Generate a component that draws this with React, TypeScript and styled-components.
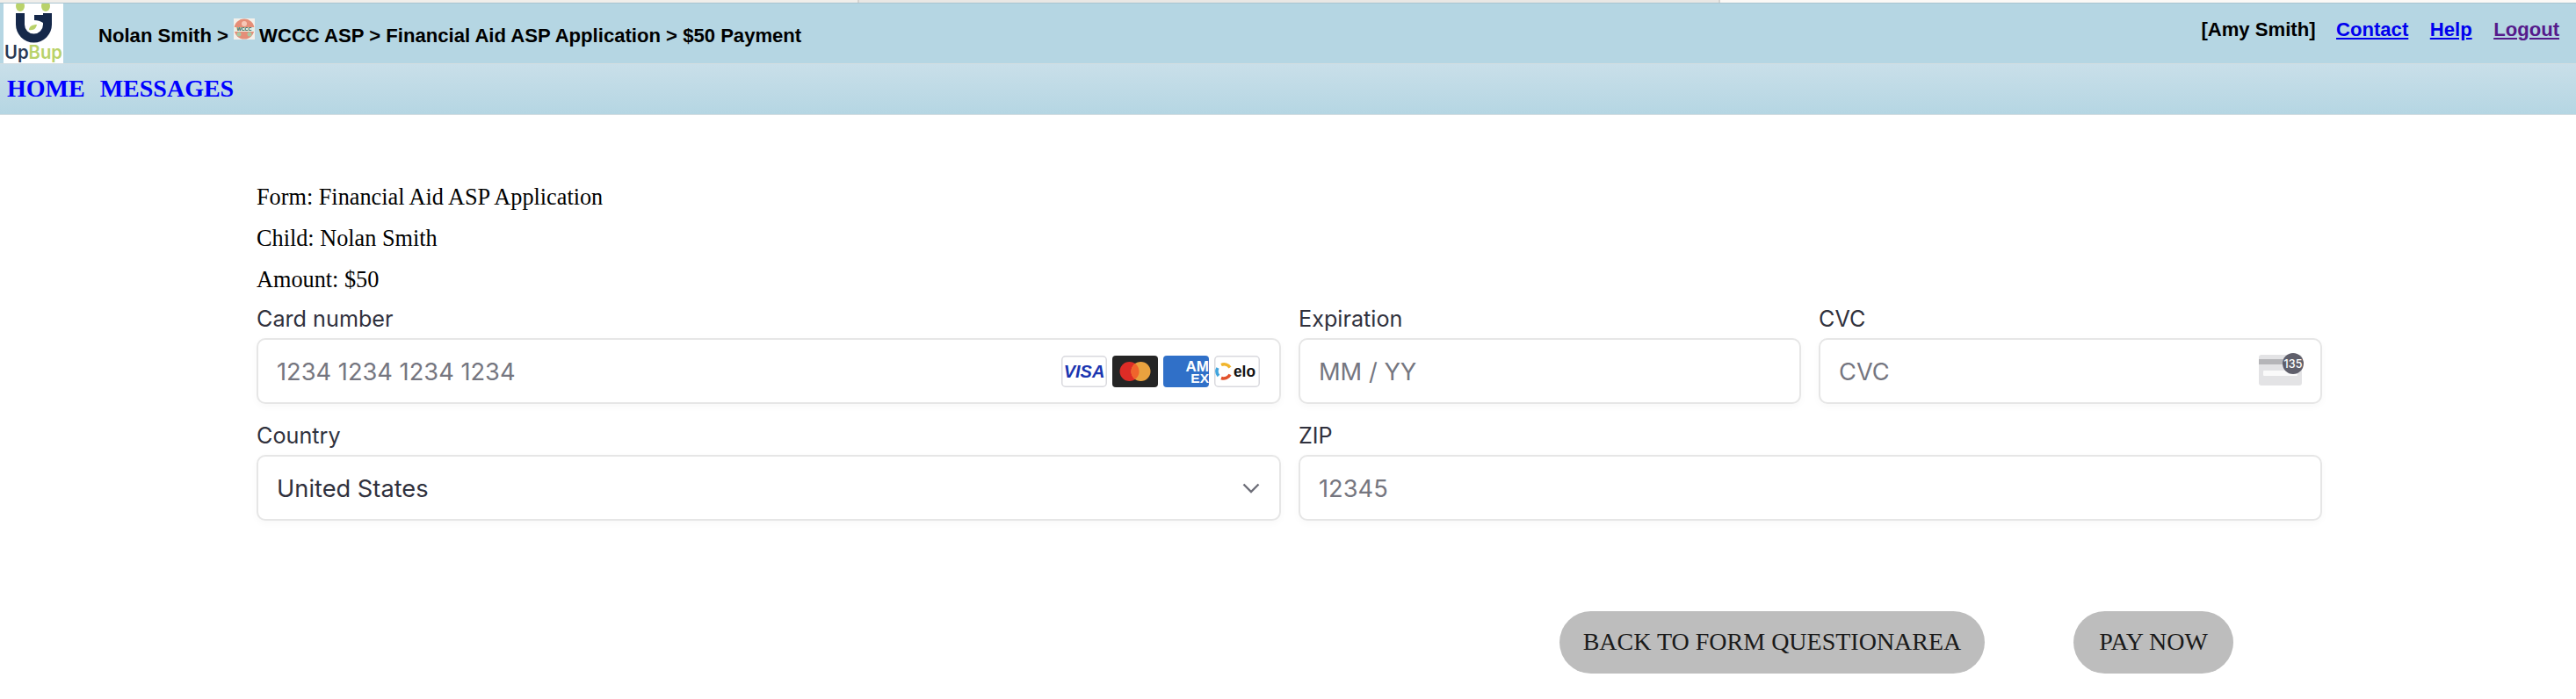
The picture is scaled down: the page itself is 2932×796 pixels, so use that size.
import React from "react";
import styled, { createGlobalStyle } from "styled-components";

const Global = createGlobalStyle`
  html, body { margin: 0; padding: 0; background: #fff; }
  body { font-family: "Liberation Serif", serif; color: #000; overflow: hidden; }
`;
const Page = styled.div`
  width: 2932px;
  height: 796px;
  overflow: hidden;
  display: flex;
  flex-direction: column;
`;
const TopStrip = styled.div`
  height: 4px;
  display: grid;
  grid-template-columns: 978px 980px 1fr;
  border-bottom: 1px solid #a9c4d0;
  box-sizing: border-box;
`;
const StripTab = styled.div<{ $bg: string; $edge?: boolean }>`
  background: ${(p) => p.$bg};
  border-right: ${(p) => (p.$edge ? "2px solid #d6d4d1" : "0")};
`;
const Header = styled.header`
  height: 68px;
  background: #b5d6e3;
  display: flex;
  padding-left: 4px;
  font: bold 22.1px "Liberation Sans", Arial, sans-serif;
`;
const LogoBox = styled.div`
  width: 68px;
  height: 68px;
  background: #fff;
  flex: none;
`;
const Crumbs = styled.div`
  margin-left: 40px;
  padding-top: 24px;
  display: flex;
  align-items: flex-start;
  white-space: pre;
  line-height: 26px;
`;
const CrumbIcon = styled.svg`
  width: 24px;
  height: 24px;
  margin: -7px 5px 0 0;
  flex: none;
`;
const Account = styled.div`
  margin-left: auto;
  padding: 17px 19px 0 0;
  display: flex;
  gap: 24.5px;
  line-height: 26px;
`;
const AccountName = styled.span`
  margin-right: -1px;
`;
const AccountLink = styled.a<{ $visited?: boolean }>`
  color: ${(p) => (p.$visited ? "#551a8b" : "#0000ee")};
  text-decoration: underline;
`;
const Nav = styled.nav`
  height: 59px;
  box-sizing: border-box;
  background: linear-gradient(#c9dfe9, #b5d6e3);
  border-top: 1px solid #d3dde1;
  border-bottom: 1px solid #d3dde1;
  display: flex;
  align-items: center;
  gap: 17px;
  padding: 0 0 1px 8px;
`;
const NavLink = styled.a`
  color: #0000ff;
  font: bold 28px "Liberation Serif", serif;
`;
const Content = styled.main`
  padding: 79px 0 0 292px;
  width: 2350px;
`;
const InfoLine = styled.div`
  font-size: 26.25px;
  line-height: 30px;
  height: 30px;
  margin-bottom: 17px;
`;
const PayForm = styled.div`
  display: grid;
  grid-template-columns: 1166px 572px 573px;
  column-gap: 20px;
  row-gap: 20px;
  margin-top: -4px;
`;
const Field = styled.div<{ $span?: number }>`
  grid-column: span ${(p) => p.$span ?? 1};
  display: flex;
  flex-direction: column;
`;
const Label = styled.label`
  font: 25.2px/32px Inter, sans-serif;
  color: #30313d;
  margin-bottom: 6px;
`;
const InputBox = styled.div`
  height: 75px;
  box-sizing: border-box;
  border: 2px solid #e6e6e6;
  border-radius: 10px;
  background: #fff;
  box-shadow: 0 3px 8px rgba(0, 0, 0, 0.03);
  padding: 1px 22px 0 21px;
  display: flex;
  align-items: center;
  justify-content: space-between;
  font: 27.25px Inter, sans-serif;
`;
const Placeholder = styled.span`
  color: #757680;
`;
const Value = styled.span`
  color: #30313d;
`;
const CardLogos = styled.div`
  display: flex;
  gap: 6px;
`;
const CardSvg = styled.svg`
  width: 52px;
  height: 36px;
  display: block;
`;
const CvcSvg = styled.svg`
  width: 52px;
  height: 38px;
  margin-right: -4px;
  display: block;
  overflow: visible;
`;
const Chevron = styled.svg`
  width: 20px;
  height: 12px;
  display: block;
`;
const Actions = styled.div`
  display: flex;
  padding: 103px 0 0 1483px;
  gap: 101px;
`;
const PillButton = styled.button<{ $w: number }>`
  width: ${(p) => p.$w}px;
  height: 71px;
  border: 0;
  border-radius: 36px;
  background: #bdbdbd;
  color: #1a1a1a;
  font: 28px "Liberation Serif", serif;
  padding: 0 0 2px;
`;

function Logo() {
  return (
    <svg width="68" height="68" viewBox="0 0 68 68">
      <ellipse cx="19" cy="3" rx="5" ry="6" fill="#b9d26a" />
      <ellipse cx="48" cy="3" rx="5" ry="6" fill="#b9d26a" />
      <path d="M14 11v13a20.5 20.5 0 0 0 41 0V11H45v13a10.5 10.5 0 0 1-21 0V11z" fill="#15284a" />
      <path d="M35 13h10v9c-3-2-6-3-10-3z" fill="#15284a" />
      <path d="M29 30c0-4 4-6 9-6-1 4-3 7-9 6z" fill="#b9d26a" />
      <text x="1" y="63" fontFamily="Inter, sans-serif" fontSize="21" fontWeight="600" textLength="66" lengthAdjust="spacingAndGlyphs">
        <tspan fill="#2a3a55">Up</tspan>
        <tspan fill="#b9d26a">Bup</tspan>
      </text>
    </svg>
  );
}

function WcccIcon() {
  return (
    <CrumbIcon viewBox="0 0 24 24">
      <rect width="24" height="24" fill="#f4f0ea" />
      <circle cx="12" cy="12" r="11.5" fill="#e58e78" />
      <circle cx="12" cy="6" r="3" fill="#f6c8b8" />
      <circle cx="6" cy="18" r="2.5" fill="#a8c9a4" />
      <circle cx="18" cy="18" r="2.5" fill="#a8c9a4" />
      <rect x="0" y="10" width="24" height="5" fill="#e8efe6" />
      <text x="12" y="14.4" textAnchor="middle" fontFamily="Liberation Sans, sans-serif" fontWeight="700" fontSize="5.5" fill="#1f5a45">WCCC</text>
    </CrumbIcon>
  );
}

function Visa() {
  return (
    <CardSvg viewBox="0 0 52 36">
      <rect x="0.75" y="0.75" width="50.5" height="34.5" rx="4" fill="#fff" stroke="#d9d9de" strokeWidth="1.5" />
      <text x="26" y="25" textAnchor="middle" fontFamily="Liberation Sans, sans-serif" fontStyle="italic" fontWeight="700" fontSize="20" fill="#1a35b0">VISA</text>
    </CardSvg>
  );
}
function Mastercard() {
  return (
    <CardSvg viewBox="0 0 52 36">
      <rect width="52" height="36" rx="4" fill="#252525" />
      <circle cx="19.5" cy="18" r="11" fill="#dd2c26" />
      <circle cx="32.5" cy="18" r="11" fill="#e9a23f" />
      <path d="M26 9.1a11 11 0 0 1 0 17.8 11 11 0 0 1 0-17.8z" fill="#f0642c" />
    </CardSvg>
  );
}
function Amex() {
  return (
    <CardSvg viewBox="0 0 52 36">
      <rect width="52" height="36" rx="4" fill="#3070c8" />
      <text x="52" y="18" textAnchor="end" fontFamily="Liberation Sans, sans-serif" fontWeight="700" fontSize="17" fill="#fff">AM</text>
      <text x="52" y="30.5" textAnchor="end" fontFamily="Liberation Sans, sans-serif" fontWeight="700" fontSize="15.5" fill="#fff">EX</text>
    </CardSvg>
  );
}
function Elo() {
  return (
    <CardSvg viewBox="0 0 52 36">
      <rect x="0.75" y="0.75" width="50.5" height="34.5" rx="4" fill="#fff" stroke="#d9d9de" strokeWidth="1.5" />
      <path d="M8 10.5a8 8 0 0 1 10 3" fill="none" stroke="#f1b52c" strokeWidth="3.5" />
      <path d="M4 14a8 8 0 0 0 1 9" fill="none" stroke="#41a5dd" strokeWidth="3.5" />
      <path d="M8 25.5a8 8 0 0 0 10-4" fill="none" stroke="#e2522c" strokeWidth="3.5" />
      <text x="22" y="24" fontFamily="Liberation Sans, sans-serif" fontWeight="700" fontSize="18" textLength="25" lengthAdjust="spacingAndGlyphs" fill="#111">elo</text>
    </CardSvg>
  );
}
function CvcIcon() {
  return (
    <CvcSvg viewBox="0 0 52 38">
      <rect x="0" y="0" width="49" height="35" rx="3" fill="#e3e3e5" />
      <rect x="0" y="5" width="49" height="6" fill="#b5b5b8" />
      <rect x="5" y="18" width="39" height="6" rx="1" fill="#fafafa" />
      <circle cx="39" cy="10" r="12" fill="#5f5f6b" />
      <text x="39" y="14.5" textAnchor="middle" fontFamily="Inter, sans-serif" fontSize="12.5" fontWeight="500" fill="#fff">135</text>
    </CvcSvg>
  );
}

export default function App() {
  return (
    <Page>
      <Global />
      <TopStrip>
        <StripTab $bg="#f0eeea" $edge />
        <StripTab $bg="#e9e7e4" $edge />
        <StripTab $bg="#fbf9f6" />
      </TopStrip>
      <Header>
        <LogoBox>
          <Logo />
        </LogoBox>
        <Crumbs>
          <span>Nolan Smith &gt; </span>
          <WcccIcon />
          <span>WCCC ASP &gt; Financial Aid ASP Application &gt; $50 Payment</span>
        </Crumbs>
        <Account>
          <AccountName>[Amy Smith]</AccountName>
          <AccountLink href="#contact">Contact</AccountLink>
          <AccountLink href="#help">Help</AccountLink>
          <AccountLink href="#logout" $visited>Logout</AccountLink>
        </Account>
      </Header>
      <Nav>
        <NavLink>HOME</NavLink>
        <NavLink>MESSAGES</NavLink>
      </Nav>
      <Content>
        <InfoLine>Form: Financial Aid ASP Application</InfoLine>
        <InfoLine>Child: Nolan Smith</InfoLine>
        <InfoLine>Amount: $50</InfoLine>
        <PayForm>
          <Field>
            <Label>Card number</Label>
            <InputBox>
              <Placeholder>1234 1234 1234 1234</Placeholder>
              <CardLogos>
                <Visa />
                <Mastercard />
                <Amex />
                <Elo />
              </CardLogos>
            </InputBox>
          </Field>
          <Field>
            <Label>Expiration</Label>
            <InputBox>
              <Placeholder>MM / YY</Placeholder>
            </InputBox>
          </Field>
          <Field>
            <Label>CVC</Label>
            <InputBox>
              <Placeholder>CVC</Placeholder>
              <CvcIcon />
            </InputBox>
          </Field>
          <Field>
            <Label>Country</Label>
            <InputBox>
              <Value>United States</Value>
              <Chevron viewBox="0 0 20 12">
                <path d="M1.5 1.5 10 10l8.5-8.5" fill="none" stroke="#6d6e78" strokeWidth="2.4" />
              </Chevron>
            </InputBox>
          </Field>
          <Field $span={2}>
            <Label>ZIP</Label>
            <InputBox>
              <Placeholder>12345</Placeholder>
            </InputBox>
          </Field>
        </PayForm>
        <Actions>
          <PillButton $w={484}>BACK TO FORM QUESTIONAREA</PillButton>
          <PillButton $w={182}>PAY NOW</PillButton>
        </Actions>
      </Content>
    </Page>
  );
}
